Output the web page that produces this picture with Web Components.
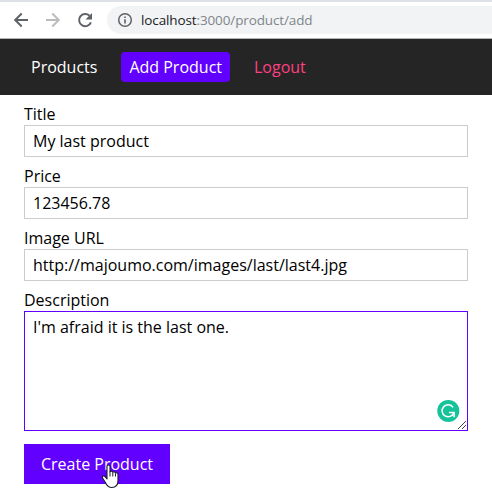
<!DOCTYPE html>
<html lang="en">
<head>
<meta charset="utf-8">
<title>Add Product</title>
<style>
body { margin: 0; background: #fff; color: #000; font: 16px/22px "Open Sans", "Noto Sans", sans-serif; overflow: hidden; }
</style>
</head>
<body>
<shop-page></shop-page>
<script>
const define = (name, html) => {
  const template = document.createElement('template');
  template.innerHTML = html;
  customElements.define(name, class extends HTMLElement {
    constructor() {
      super();
      this.attachShadow({ mode: 'open' }).append(template.content.cloneNode(true));
    }
  });
};

define('browser-bar', `
<style>
:host { display: flex; box-sizing: border-box; height: 39px; padding: 4px 0 4px 11px; border-top: 2px solid #dee1e6; border-bottom: 1px solid #b3b5b5; background: #fff; }
.tools { display: flex; gap: 12px; align-items: center; width: 96px; flex: none; height: 28px; }
.tools svg { display: block; flex: none; }
.address { flex: 1; display: flex; align-items: center; gap: 8px; height: 28px; padding-left: 10px; border-radius: 14px 0 0 14px; background: #f1f3f4; color: #80868b; font-size: 13.5px; line-height: 20px; white-space: pre; }
.url { letter-spacing: -0.12px; }
b { font-weight: 400; color: #202124; }
</style>
<div class="tools">
  <svg width="20" height="20" viewBox="0 0 20 20" fill="none" stroke="#5f6368" stroke-width="2"><path d="M17 10H4.500M10.700 3.500 4.200 10l6.500 6.500"/></svg>
  <svg width="20" height="20" viewBox="0 0 20 20" fill="none" stroke="#babcbe" stroke-width="2"><path d="M3 10h12.500M9.300 3.500 15.800 10l-6.500 6.500"/></svg>
  <svg width="20" height="20" viewBox="0 0 20 20"><path d="M15.900 12.300A6.100 6.100 0 1 1 14.500 5.800" fill="none" stroke="#5f6368" stroke-width="2"/><path d="M17 3v6.500h-6.500z" fill="#5f6368"/></svg>
</div>
<div class="address">
  <svg width="16" height="16" viewBox="0 0 16 16"><circle cx="8" cy="8" r="6.300" fill="none" stroke="#5f6368" stroke-width="1.500"/><path d="M7.200 4.500h1.600v1.600H7.200zM7.200 7.200h1.600v4.300H7.200z" fill="#5f6368"/></svg>
  <span class="url"><b>localhost</b>:3000/product/add</span>
</div>`);

define('nav-link', `
<style>
:host { display: block; padding: 4px 8px; border-radius: 4px; color: #fff; white-space: nowrap; }
:host([active]) { background: #6200ff; }
:host([accent]) { color: #ff4081; }
</style><slot></slot>`);

define('nav-bar', `
<style>
:host { display: flex; align-items: center; gap: 16px; box-sizing: border-box; height: 56px; padding-left: 23px; background: #252525; }
</style><slot></slot>`);

define('form-field', `
<style>
:host { display: block; margin-bottom: 8px; }
.box { box-sizing: border-box; height: 32px; padding: 4px 8px; border: 1px solid #ccc; white-space: nowrap; }
:host([multiline]) .box { position: relative; height: 120px; border-color: #6200ff; }
.overlay { display: none; }
:host([multiline]) .overlay { display: block; position: absolute; right: 0; bottom: 0; }
</style>
<div><slot name="label"></slot></div>
<div class="box"><slot></slot>
  <svg class="overlay" width="32" height="32" viewBox="0 0 32 32"><circle cx="13.300" cy="12.900" r="11" fill="#15c39a"/><path d="M18.100 9.400A6 6 0 1 0 18.800 14.700M14 14.500h5.200v4.800" fill="none" stroke="#fff" stroke-width="1.500"/><path d="M23 31l8-8M27 31l4-4" stroke="#444" stroke-width="1"/></svg>
</div>`);

define('action-button', `
<style>
:host { display: flex; align-items: center; justify-content: center; position: relative; width: 146px; height: 40px; margin-top: 13px; background: #6200ff; color: #fff; white-space: nowrap; }
svg { position: absolute; left: 77px; top: 20px; }
</style><slot></slot>
<svg width="20" height="25" viewBox="0 0 20 25"><path d="M6 2.500c0-2 3-2 3 0v5.300c.5-1 2.600-.8 2.800.5.700-.9 2.500-.5 2.700.8.700-.6 2.500-.2 2.500 1.300v6.100c0 4-2 7-6.200 7-3.800 0-5.300-2.500-6.400-5L1.600 14c-.9-1.800 1.200-2.800 2.500-1.300L6 15z" fill="#fff" stroke="#1c1c30" stroke-width="1.100" stroke-linejoin="round"/><path d="M9 7.500v5M11.800 8.500v4M14.500 9.500v3" stroke="#1c1c30" stroke-width="1"/></svg>`);

define('shop-page', `
<style>
:host { display: block; height: 503px; }
main { padding: 8px 24px; }
</style>
<browser-bar></browser-bar>
<nav-bar><nav-link>Products</nav-link><nav-link active>Add Product</nav-link><nav-link accent>Logout</nav-link></nav-bar>
<main>
  <form-field><span slot="label">Title</span>My last product</form-field>
  <form-field><span slot="label">Price</span>123456.78</form-field>
  <form-field><span slot="label">Image URL</span>http://majoumo.com/images/last/last4.jpg</form-field>
  <form-field multiline><span slot="label">Description</span>I'm afraid it is the last one.</form-field>
  <action-button>Create Product</action-button>
</main>`);
</script>
</body>
</html>
